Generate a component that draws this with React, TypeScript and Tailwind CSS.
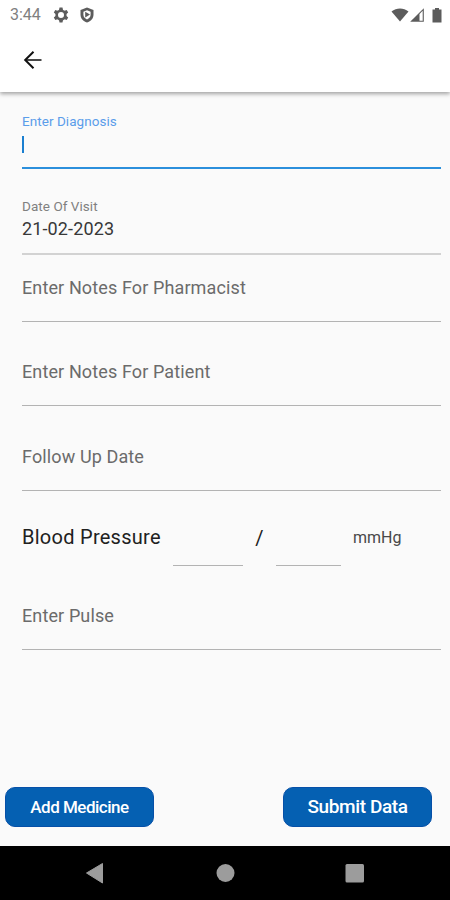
type FieldProps = {
  label: string,
  className: string,
};

const Field = ({ label, className }: FieldProps) => {
  return (
    <div className={`flex flex-col justify-end border-b border-[#b3b3b3] ${className}`}>
      <span className="text-[18px] leading-6 tracking-[0.12px] text-[#6b6b6b]">{label}</span>
    </div>
  );
};

const StatusBar = () => {
  return (
    <div className="flex h-[30px] items-center justify-between pl-[10px] pr-[8px] text-[#5c5c5c]">
      <div className="flex items-center">
        <span className="w-[43px] text-[16px] leading-5 text-[#808080]">3:44</span>
        <svg className="h-[16px] w-[16px]" viewBox="0 0 16 16">
          <circle cx="8" cy="8" r="4.300" fill="none" stroke="#5c5c5c" strokeWidth="2.600" />
          <path d="M6.500 0.500h3l0.600 3H5.900ZM6.500 15.500h3l0.600-3H5.900ZM0.800 5.500 2.300 2.900 5.200 4 3.100 7.500ZM15.200 5.500 13.700 2.900 10.800 4l2.100 3.500ZM0.800 10.500l1.500 2.600L5.200 12 3.100 8.500ZM15.200 10.500l-1.500 2.600L10.800 12l2.100-3.500Z" fill="#5c5c5c" />
        </svg>
        <svg className="ml-[11px] h-[16px] w-[14px]" viewBox="0 0 14 16">
          <path d="M7 0.500 13.500 3v4.500c0 3.800-2.600 6.800-6.500 8-3.900-1.200-6.500-4.200-6.500-8V3Z" fill="#5c5c5c" />
          <path d="M7 3.300 10.600 4.700v3c0 2-1.400 3.800-3.600 4.700C4.800 11.500 3.400 9.700 3.400 7.700v-3Z" fill="#fff" />
          <path d="M5.200 4.800 10 7.600 5.200 10.500Z" fill="#5c5c5c" />
        </svg>
      </div>
      <div className="flex items-center">
        <svg className="h-[14px] w-[18px]" viewBox="0 0 18 14">
          <path d="M0.500 3.600C5.500-0.400 12.500-0.400 17.500 3.600L9 13.600Z" fill="#5c5c5c" />
        </svg>
        <svg className="ml-[1px] h-[14px] w-[14px]" viewBox="0 0 14 14">
          <path d="M13.800 0.200V13.800H0.200Z" fill="#5c5c5c" />
          <path d="M9.500 6 12.700 2.800V12.700H9.500Z" fill="#fff" />
        </svg>
        <svg className="ml-[8px] h-[15px] w-[10px]" viewBox="0 0 10 15">
          <path d="M3 0h4v1.500h2.500V14.500h-9V1.500H3Z" fill="#5c5c5c" />
        </svg>
      </div>
    </div>
  );
};

const App = () => {
  return (
    <div className="flex h-[900px] w-[450px] flex-col overflow-hidden bg-[#fafafa] font-['Roboto',sans-serif]">
      <header className="h-[92px] shrink-0 bg-white shadow-[0_2px_4px_rgba(0,0,0,0.35)]">
        <StatusBar />
        <button className="ml-[20px] mt-[17px] flex h-[26px] w-[26px] items-center justify-center">
          <svg className="h-[26px] w-[26px]" viewBox="0 0 26 26" fill="none">
            <path d="M5 13H21.500" stroke="#333" strokeWidth="1.800" />
            <path d="M13.500 4.700 5.200 13l8.300 8.300" stroke="#111" strokeWidth="2" />
          </svg>
        </button>
      </header>

      <main className="flex flex-col pl-[22px] pr-[9px]">
        <div className="flex h-[77px] flex-col border-b-2 border-[#2b8fdc] pt-[21px]">
          <span className="text-[13.500px] leading-4 tracking-[0.05px] text-[#5a9dea]">Enter Diagnosis</span>
          <span className="mt-[7px] h-[17px] w-[2px] bg-[#1a7fd0]"></span>
        </div>

        <div className="flex h-[86px] flex-col border-b-2 border-[#d2d2d2] pt-[29px]">
          <span className="text-[13.500px] leading-4 tracking-[0.05px] text-[#808080]">Date Of Visit</span>
          <span className="mt-[3px] text-[18px] leading-6 tracking-[0.13px] text-[#383838]">21-02-2023</span>
        </div>

        <Field label="Enter Notes For Pharmacist" className="h-[67px] pb-[21px]" />
        <Field label="Enter Notes For Patient" className="h-[84px] pb-[21px]" />
        <Field label="Follow Up Date" className="h-[85px] pb-[21px]" />

        <div className="flex h-[75px] items-end">
          <span className="w-[151px] pb-[17px] text-[20px] leading-6 tracking-[0.27px] text-[#202020]">Blood Pressure</span>
          <div className="h-[40px] w-[70px] border-b border-[#b3b3b3]"></div>
          <span className="w-[33px] pb-[16px] text-center text-[20px] leading-6 text-[#202020]">/</span>
          <div className="h-[40px] w-[65px] border-b border-[#b3b3b3]"></div>
          <span className="ml-[12px] pb-[16px] text-[16px] leading-6 text-[#484848]">mmHg</span>
        </div>

        <Field label="Enter Pulse" className="h-[84px] pb-[21px]" />
      </main>

      <div className="mt-auto mb-[19px] flex shrink-0 justify-between pl-[5px] pr-[18px]">
        <button className="h-[40px] w-[149px] rounded-[10px] border border-[#0650a8] bg-[#0560b2] pt-px text-[17px] font-medium tracking-[-0.5px] text-white">Add Medicine</button>
        <button className="h-[40px] w-[149px] rounded-[10px] border border-[#0650a8] bg-[#0560b2] pt-px text-[19px] font-medium tracking-[-0.4px] text-white">Submit Data</button>
      </div>

      <nav className="h-[54px] shrink-0 bg-black">
        <svg className="h-[54px] w-[450px]" viewBox="0 0 450 54" fill="#9c9c9c">
          <path d="M86.500 27 102.500 17.500V37Z" stroke="#9c9c9c" strokeLinejoin="round" />
          <circle cx="225.500" cy="27" r="9" />
          <rect x="345.500" y="18" width="18.500" height="18.500" rx="1.500" />
        </svg>
      </nav>
    </div>
  );
};

export default App;
